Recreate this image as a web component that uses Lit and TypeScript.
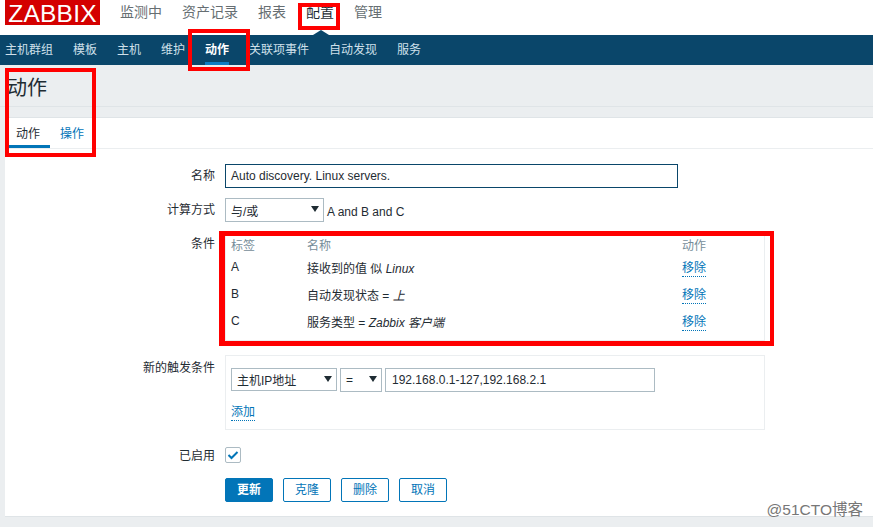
import { LitElement, html, css } from "lit";
import { customElement } from "lit/decorators.js";

@customElement("app-root")
export class AppRoot extends LitElement {
  static styles = css`
    :host {
      display: block;
      position: relative;
      width: 873px;
      height: 527px;
      overflow: hidden;
      background: #ebeef0;
      font-family: "Liberation Sans", "Noto Sans CJK SC", Arial, sans-serif;
      font-size: 12px;
      color: #1f2c33;
    }
    .top { height: 35px; background: #fff; display: flex; position: relative; }
    .logo {
      margin: 0 0 0 5px; width: 95px; height: 25px; background: #d40000; color: #fff;
      font-size: 24.5px; line-height: 28.5px; letter-spacing: 0.25px; text-align: center;
    }
    .mainnav { display: flex; gap: 20px; margin-left: 20px; font-size: 14px; line-height: 25px; color: #666e72; }
    .mainnav .on { color: #1f2c33; }
    .caret {
      position: absolute; left: 313px; top: 30px; width: 0; height: 0;
      border-left: 8px solid transparent; border-right: 8px solid transparent; border-bottom: 5px solid #0a466a;
    }
    .subnav { height: 30px; background: #0a466a; display: flex; padding-left: 5px; gap: 20px; color: #cfe0ea; line-height: 31px; }
    .subnav span { position: relative; height: 30px; }
    .subnav .on { color: #fff; font-weight: bold; }
    .subnav .on::after { content: ""; position: absolute; left: 0; right: 0; bottom: 0; height: 3px; background: #0d7cc2; }
    .head { height: 41px; border-bottom: 1px solid #dfe4e7; font-size: 20px; line-height: 46px; padding-left: 7px; box-sizing: content-box; }
    .gap { height: 10px; }
    .card { margin-left: 5px; height: 400px; background: #fff; border-top: 1px solid #dfe4e7; border-bottom: 1px solid #dfe4e7; box-sizing: border-box; }
    .tabs { height: 31px; display: flex; gap: 20px; padding-left: 11px; border-bottom: 1px solid #ebeef0; line-height: 32px; color: #0275b8; box-sizing: border-box; }
    .tabs span { position: relative; height: 30px; }
    .tabs .on { color: #1f2c33; }
    .tabs .on::after { content: ""; position: absolute; left: -11px; right: -10px; bottom: 0; height: 3px; background: #0275b8; }
    .form { display: grid; grid-template-columns: 210px 1fr; column-gap: 10px; align-content: start; padding-top: 15px; }
    .lab { text-align: right; line-height: 25px; color: #1f2c33; }
    .lab.t { line-height: 27px; }
    .field {
      box-sizing: border-box; height: 24px; border: 1px solid #acbbc3; background: #fff; padding: 0 5px;
      line-height: 22px; position: relative; flex: none; color: #1f2c33;
    }
    .name { width: 453px; border-color: #0a466a; }
    .row { display: flex; align-items: center; gap: 3px; }
    .r1 { height: 24px; margin-bottom: 10px; }
    .aftersel { padding-top: 3px; }
    .sel { line-height: 26px; }
    .sel::after {
      content: ""; position: absolute; right: 4px; top: 7px; width: 0; height: 0;
      border-left: 4px solid transparent; border-right: 4px solid transparent; border-top: 6px solid #1f2c33;
    }
    .w-calc { width: 99px; }
    .w-attr { width: 106px; height: 23px; margin-top: -2px; line-height: 24px; }
    .w-op { width: 42px; line-height: 23px; }
    .w-val { width: 270px; padding-left: 6px; }
    .conds {
      width: 540px; height: 109px; box-sizing: border-box; border: 1px solid #ebeef0; margin-bottom: 14px;
      display: grid; grid-template-columns: 76px 375px 1fr; grid-template-rows: 22px repeat(3, 27px); padding: 0 0 0 5px; align-items: center;
    }
    .conds .h { color: #768d99; height: 20px; line-height: 20px; align-self: start; margin-top: 3px; }
    .conds .c { padding-bottom: 3px; }
    .conds i { font-style: italic; }
    .link { color: #0275b8; border-bottom: 1px dotted #0275b8; line-height: 15px; display: inline-block; }
    .trig { width: 540px; height: 75px; box-sizing: border-box; border: 1px solid #ebeef0; padding: 12px 5px 0; margin-bottom: 14px; }
    .mb { margin-bottom: 13px; }
    .checkrow { height: 22px; }
    .check {
      width: 16px; height: 16px; box-sizing: border-box; border: 1px solid #acbbc3; border-radius: 2px; background: #fff;
      display: flex; align-items: center; justify-content: center;
    }
    .btns { display: flex; gap: 10px; margin-top: 9px; }
    .btn {
      box-sizing: border-box; width: 48px; height: 24px; border: 1px solid #0275b8; border-radius: 2px; color: #0275b8;
      text-align: center; line-height: 22px; background: #fff;
    }
    .btn.pri { background: #0275b8; color: #fff; font-weight: bold; }
    .mark { position: absolute; box-sizing: border-box; border: 4px solid #ff0000; }
    .m1 { left: 298px; top: 3px; width: 42px; height: 27px; }
    .m2 { left: 188px; top: 29px; width: 62px; height: 42px; }
    .m3 { left: 5px; top: 68px; width: 91px; height: 89px; }
    .m4 { left: 219px; top: 231px; width: 555px; height: 115px; border-width: 5px 4px 5px 6px; }
    .wm { position: absolute; right: 10px; bottom: 9px; font-size: 15.5px; line-height: 16px; color: #777; }
  `;

  render() {
    const subnav = ["主机群组", "模板", "主机", "维护", "动作", "关联项事件", "自动发现", "服务"];
    const main = ["监测中", "资产记录", "报表", "配置", "管理"];
    const rows = [
      ["A", html`接收到的值 似 <i>Linux</i>`],
      ["B", html`自动发现状态 = <i>上</i>`],
      ["C", html`服务类型 = <i>Zabbix 客户端</i>`],
    ];
    return html`
      <div class="top">
        <div class="logo">ZABBIX</div>
        <div class="mainnav">${main.map((m) => html`<span class=${m === "配置" ? "on" : ""}>${m}</span>`)}</div>
        <div class="caret"></div>
      </div>
      <div class="subnav">${subnav.map((s) => html`<span class=${s === "动作" ? "on" : ""}>${s}</span>`)}</div>
      <div class="head">动作</div>
      <div class="gap"></div>
      <div class="card">
        <div class="tabs"><span class="on">动作</span><span>操作</span></div>
        <div class="form">
          <div class="lab">名称</div>
          <div class="r1"><div class="field name">Auto discovery. Linux servers.</div></div>
          <div class="lab">计算方式</div>
          <div class="row r1"><div class="field sel w-calc">与/或</div><span class="aftersel">A and B and C</span></div>
          <div class="lab">条件</div>
          <div class="conds">
            <div class="h">标签</div><div class="h">名称</div><div class="h">动作</div>
            ${rows.map(
              (r) => html`<div class="c">${r[0]}</div><div class="c">${r[1]}</div><div><span class="link">移除</span></div>`
            )}
          </div>
          <div class="lab t">新的触发条件</div>
          <div class="trig">
            <div class="row mb">
              <div class="field sel w-attr">主机IP地址</div>
              <div class="field sel w-op">=</div>
              <div class="field w-val">192.168.0.1-127,192.168.2.1</div>
            </div>
            <span class="link">添加</span>
          </div>
          <div class="lab">已启用</div>
          <div class="row checkrow">
            <div class="check">
              <svg width="12" height="10" viewBox="0 0 12 10"><path d="M1.5 5 L4.5 8 L10.5 2" fill="none" stroke="#0275b8" stroke-width="2"/></svg>
            </div>
          </div>
          <div></div>
          <div class="btns">
            <div class="btn pri">更新</div><div class="btn">克隆</div><div class="btn">删除</div><div class="btn">取消</div>
          </div>
        </div>
      </div>
      <div class="mark m1"></div>
      <div class="mark m2"></div>
      <div class="mark m3"></div>
      <div class="mark m4"></div>
      <div class="wm">@51CTO博客</div>
    `;
  }
}
